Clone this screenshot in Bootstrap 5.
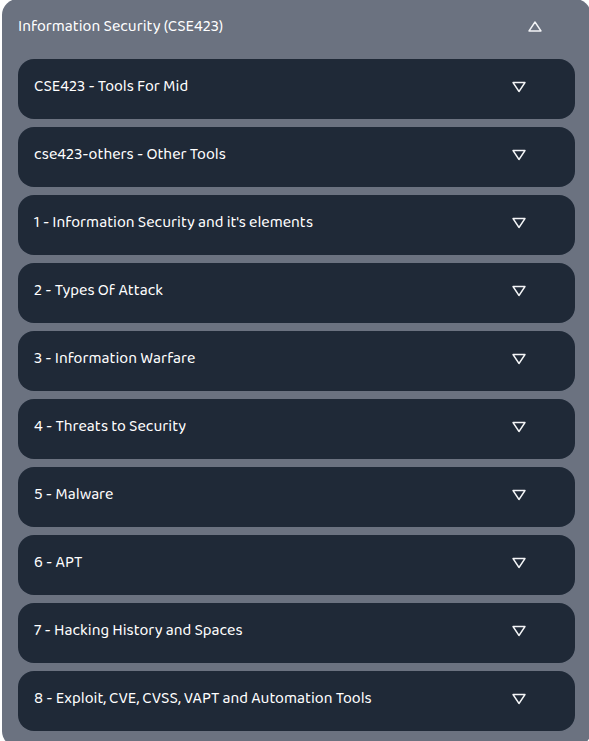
<!DOCTYPE html>
<html lang="en">
<head>
<meta charset="utf-8">
<meta name="viewport" content="width=device-width, initial-scale=1">
<title>Information Security (CSE423)</title>
<link href="https://cdn.jsdelivr.net/npm/bootstrap@5.3.0/dist/css/bootstrap.min.css" rel="stylesheet">
<style>
  body { font-family: "Baloo 2", Lato, "Noto Sans", sans-serif; overflow-x: hidden; scrollbar-width: none; }
  .course-panel { margin: -1px -2px 0 2px; border-radius: 16px; background: #6b7280; }
  .toggle-row { height: 60px; padding: 0 48px 4px 16px; font-size: 16px; line-height: 24px; color: #fff; background: transparent; }
  .topic-row { border-radius: 16px; background: #1f2937; }
  .toggle-row svg { width: 16px; height: 16px; fill: none; stroke: #f3f4f6; stroke-width: 1.4; stroke-linejoin: round; }
</style>
</head>
<body>
<main class="course-panel">
  <button class="toggle-row w-100 border-0 d-flex align-items-center justify-content-between text-start" type="button" data-bs-toggle="collapse" data-bs-target="#topics" aria-expanded="true" aria-controls="topics"><span>Information Security (CSE423)</span><svg viewBox="0 0 16 16" aria-hidden="true"><path d="M8 3 14 12H2Z"/></svg></button>
  <div id="topics" class="collapse show">
    <div class="d-flex flex-column gap-2 px-3 pb-3">
      <button class="toggle-row topic-row border-0 d-flex align-items-center justify-content-between text-start" type="button"><span>CSE423 - Tools For Mid</span><svg viewBox="0 0 16 16" aria-hidden="true"><path d="M2 3.5H14L8 12.5Z"/></svg></button>
      <button class="toggle-row topic-row border-0 d-flex align-items-center justify-content-between text-start" type="button"><span>cse423-others - Other Tools</span><svg viewBox="0 0 16 16" aria-hidden="true"><path d="M2 3.5H14L8 12.5Z"/></svg></button>
      <button class="toggle-row topic-row border-0 d-flex align-items-center justify-content-between text-start" type="button"><span>1 - Information Security and it's elements</span><svg viewBox="0 0 16 16" aria-hidden="true"><path d="M2 3.5H14L8 12.5Z"/></svg></button>
      <button class="toggle-row topic-row border-0 d-flex align-items-center justify-content-between text-start" type="button"><span>2 - Types Of Attack</span><svg viewBox="0 0 16 16" aria-hidden="true"><path d="M2 3.5H14L8 12.5Z"/></svg></button>
      <button class="toggle-row topic-row border-0 d-flex align-items-center justify-content-between text-start" type="button"><span>3 - Information Warfare</span><svg viewBox="0 0 16 16" aria-hidden="true"><path d="M2 3.5H14L8 12.5Z"/></svg></button>
      <button class="toggle-row topic-row border-0 d-flex align-items-center justify-content-between text-start" type="button"><span>4 - Threats to Security</span><svg viewBox="0 0 16 16" aria-hidden="true"><path d="M2 3.5H14L8 12.5Z"/></svg></button>
      <button class="toggle-row topic-row border-0 d-flex align-items-center justify-content-between text-start" type="button"><span>5 - Malware</span><svg viewBox="0 0 16 16" aria-hidden="true"><path d="M2 3.5H14L8 12.5Z"/></svg></button>
      <button class="toggle-row topic-row border-0 d-flex align-items-center justify-content-between text-start" type="button"><span>6 - APT</span><svg viewBox="0 0 16 16" aria-hidden="true"><path d="M2 3.5H14L8 12.5Z"/></svg></button>
      <button class="toggle-row topic-row border-0 d-flex align-items-center justify-content-between text-start" type="button"><span>7 - Hacking History and Spaces</span><svg viewBox="0 0 16 16" aria-hidden="true"><path d="M2 3.5H14L8 12.5Z"/></svg></button>
      <button class="toggle-row topic-row border-0 d-flex align-items-center justify-content-between text-start" type="button"><span>8 - Exploit, CVE, CVSS, VAPT and Automation Tools</span><svg viewBox="0 0 16 16" aria-hidden="true"><path d="M2 3.5H14L8 12.5Z"/></svg></button>
    </div>
  </div>
</main>
<script src="https://cdn.jsdelivr.net/npm/bootstrap@5.3.0/dist/js/bootstrap.bundle.min.js"></script>
</body>
</html>
